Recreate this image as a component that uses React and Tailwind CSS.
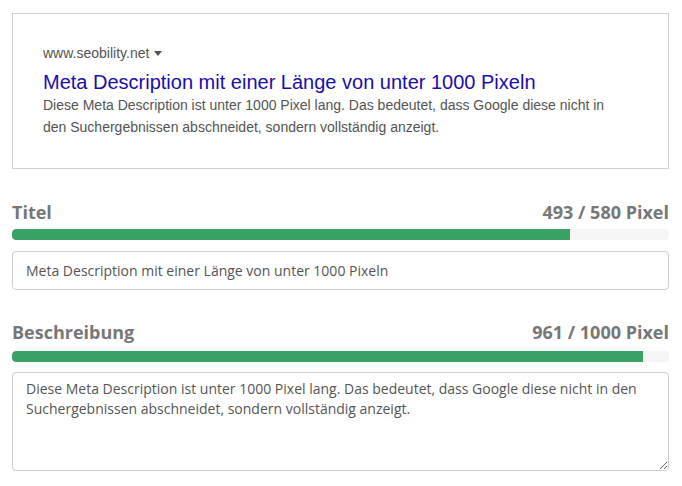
export default function App() {
  const open = { fontFamily: '"Open Sans", "Noto Sans", sans-serif' };
  const arial = { fontFamily: '"Liberation Sans", Arial, sans-serif' };
  return (
    <div className="w-[682px] h-[486px] bg-white pl-3 pt-[13px]">
      <div className="w-[657px]">
        <div className="border border-[#d0d0d0] pl-[30px] pr-[20px] pt-[30px] pb-[30px]" style={arial}>
          <div className="flex items-center gap-[5px] text-[14px] leading-[18px] text-[#545454]">
            <span>www.seobility.net</span>
            <svg width="8" height="5" viewBox="0 0 8 5"><path d="M0 0h8L4 5z" fill="#545454" /></svg>
          </div>
          <div className="mt-2 text-[20px] leading-[24px] text-[#1a0dab]">
            Meta Description mit einer Länge von unter 1000 Pixeln
          </div>
          <div className="text-[14px] leading-[22px] text-[#545454] w-[580px]">
            Diese Meta Description ist unter 1000 Pixel lang. Das bedeutet, dass Google diese nicht in den Suchergebnissen abschneidet, sondern vollständig anzeigt.
          </div>
        </div>

        <div style={open}>
          <div className="mt-[31px] flex justify-between text-[18px] leading-[24px] font-bold text-[#777777]">
            <span>Titel</span>
            <span>493 / 580 Pixel</span>
          </div>
          <div className="mt-[5px] h-[11px] rounded bg-[#f5f5f5] overflow-hidden">
            <div className="h-full bg-[#38a163] rounded-l" style={{ width: `${(493 / 580) * 100}%` }} />
          </div>
          <input
            readOnly
            value="Meta Description mit einer Länge von unter 1000 Pixeln"
            className="mt-[11px] block w-full h-[39px] border border-[#cccccc] rounded px-[13px] text-[14px] text-[#555555] outline-none"
            style={open}
          />

          <div className="mt-[30px] flex justify-between text-[18px] leading-[24px] font-bold text-[#777777]">
            <span>Beschreibung</span>
            <span>961 / 1000 Pixel</span>
          </div>
          <div className="mt-[7px] h-[11px] rounded bg-[#f5f5f5] overflow-hidden">
            <div className="h-full bg-[#38a163] rounded-l" style={{ width: `${(961 / 1000) * 100}%` }} />
          </div>
          <textarea
            readOnly
            value="Diese Meta Description ist unter 1000 Pixel lang. Das bedeutet, dass Google diese nicht in den Suchergebnissen abschneidet, sondern vollständig anzeigt."
            className="mt-[10px] block w-full h-[99px] border border-[#cccccc] rounded px-[13px] py-[6px] text-[14px] leading-[20px] text-[#555555] outline-none resize-y"
            style={open}
          />
        </div>
      </div>
    </div>
  );
}
